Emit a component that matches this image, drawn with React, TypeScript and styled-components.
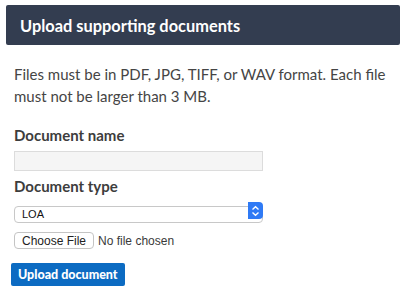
import styled, { createGlobalStyle } from "styled-components";

const GlobalStyle = createGlobalStyle`
  body {
    margin: 0;
    background: #ffffff;
    font-family: Lato, "Open Sans", sans-serif;
  }
`;

const Wrapper = styled.div`
  width: 407px;
  padding: 5px 7px 0 6px;
  box-sizing: border-box;
`;

const Header = styled.div`
  height: 40px;
  background: #333d50;
  border-radius: 2px;
  display: flex;
  align-items: center;
  padding: 0 14px;
`;

const Title = styled.h2`
  margin: 0;
  color: #ffffff;
  font-size: 16.4px;
  font-weight: 700;
`;

const Body = styled.div`
  padding: 18px 8px 0;
  display: flex;
  flex-direction: column;
`;

const Note = styled.p`
  margin: 0 0 18px;
  font-size: 15px;
  line-height: 22px;
  color: #454545;
`;

const Label = styled.label`
  font-size: 15px;
  font-weight: 700;
  color: #3d3d3d;
  line-height: 20px;
  margin-bottom: 6px;
`;

const TextInput = styled.input`
  width: 249px;
  height: 20px;
  box-sizing: border-box;
  background: #f5f5f5;
  border: 1px solid #dcdcdc;
  margin-bottom: 5px;
`;

const SelectWrap = styled.div`
  position: relative;
  width: 249px;
  height: 17px;
  margin-bottom: 13px;
`;

const Select = styled.select`
  appearance: none;
  width: 100%;
  height: 100%;
  box-sizing: border-box;
  border: 1px solid #c8c8c8;
  border-radius: 4px;
  background: #ffffff;
  padding: 0 0 0 7px;
  font-family: "Liberation Sans", Arial, sans-serif;
  font-size: 11px;
  color: #111;
`;

const Stepper = styled.span`
  position: absolute;
  right: 0;
  top: 0;
  width: 15px;
  height: 17px;
  background: #2f7af5;
  border-radius: 0 4px 4px 0;
  display: flex;
  align-items: center;
  justify-content: center;
`;

const FileRow = styled.div`
  display: flex;
  align-items: center;
  gap: 4px;
  font-family: "Liberation Sans", Arial, sans-serif;
  font-size: 12px;
  color: #3a3a3a;
  margin-bottom: 14px;
`;

const FileButton = styled.label`
  height: 17px;
  box-sizing: border-box;
  padding: 0 7px;
  border: 1px solid #c4c4c4;
  border-radius: 4px;
  background: #ffffff;
  color: #222;
  display: flex;
  align-items: center;
`;

const HiddenFile = styled.input`
  display: none;
`;

const UploadButton = styled.button`
  align-self: flex-start;
  margin-left: -3px;
  height: 23px;
  padding: 0 7px;
  border: none;
  border-radius: 2px;
  background: #0c6bc2;
  color: #ffffff;
  font-family: Lato, sans-serif;
  font-weight: 900;
  font-size: 12.5px;
`;

function App() {
  return (
    <Wrapper>
      <GlobalStyle />
      <Header>
        <Title>Upload supporting documents</Title>
      </Header>
      <Body>
        <Note>
          Files must be in PDF, JPG, TIFF, or WAV format. Each file must not be larger than 3 MB.
        </Note>
        <Label htmlFor="doc-name">Document name</Label>
        <TextInput id="doc-name" type="text" />
        <Label htmlFor="doc-type">Document type</Label>
        <SelectWrap>
          <Select id="doc-type" defaultValue="LOA">
            <option value="LOA">LOA</option>
          </Select>
          <Stepper>
            <svg width="9" height="12" viewBox="0 0 9 12" fill="none" stroke="#fff" strokeWidth="1.4">
              <path d="M1.5 4.5 4.5 1.8 7.5 4.5" />
              <path d="M1.5 7.5 4.5 10.2 7.5 7.5" />
            </svg>
          </Stepper>
        </SelectWrap>
        <FileRow>
          <FileButton>
            Choose File
            <HiddenFile type="file" />
          </FileButton>
          <span>No file chosen</span>
        </FileRow>
        <UploadButton type="button">Upload document</UploadButton>
      </Body>
    </Wrapper>
  );
}

export default App;
